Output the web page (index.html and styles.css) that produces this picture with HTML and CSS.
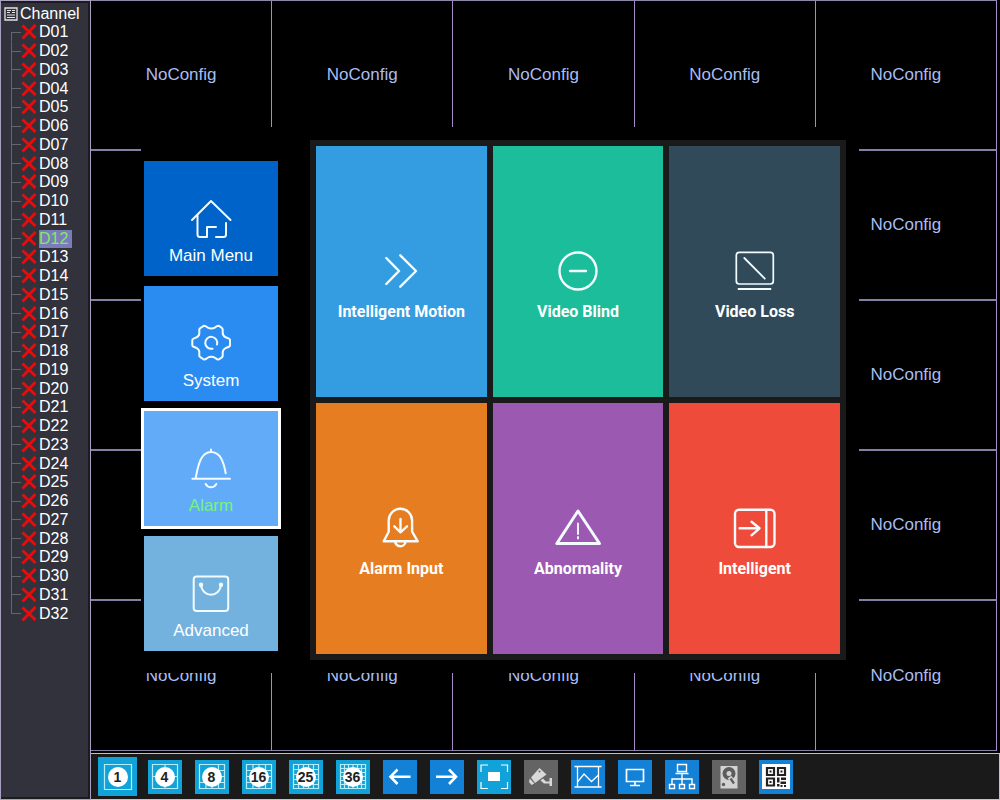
FILE: index.html
```html
<!DOCTYPE html>
<html lang="en">
<head>
<meta charset="utf-8">
<title>Video Recorder</title>
<link rel="stylesheet" href="styles.css">
</head>
<body>
<svg class="defs" aria-hidden="true">
  <symbol id="cross" viewBox="0 0 16 16"><path d="M1.500 1.500L14.500 14M14.500 1L1.500 14.500" stroke="#e80c0c" stroke-width="2.900" fill="none"/></symbol>
</svg>
<div class="app">
  <aside class="sidebar">
    <h1 class="tree-title">
      <svg class="tree-icon" viewBox="0 0 14 14"><path d="M1 1h12v12H1z" fill="none" stroke="#e4e4e4" stroke-width="1.300"/><path d="M3 3.500h4M3 5.500h3M3 8h8M3 10.500h8M8 3.500h3M8 5.500h3" stroke="#e4e4e4" stroke-width="1.200"/></svg>
      <span>Channel</span>
    </h1>
    <ul class="tree">
      <li><i></i><svg><use href="#cross"/></svg><span>D01</span></li>
      <li><i></i><svg><use href="#cross"/></svg><span>D02</span></li>
      <li><i></i><svg><use href="#cross"/></svg><span>D03</span></li>
      <li><i></i><svg><use href="#cross"/></svg><span>D04</span></li>
      <li><i></i><svg><use href="#cross"/></svg><span>D05</span></li>
      <li><i></i><svg><use href="#cross"/></svg><span>D06</span></li>
      <li><i></i><svg><use href="#cross"/></svg><span>D07</span></li>
      <li><i></i><svg><use href="#cross"/></svg><span>D08</span></li>
      <li><i></i><svg><use href="#cross"/></svg><span>D09</span></li>
      <li><i></i><svg><use href="#cross"/></svg><span>D10</span></li>
      <li><i></i><svg><use href="#cross"/></svg><span>D11</span></li>
      <li class="selected"><i></i><svg><use href="#cross"/></svg><span>D12</span></li>
      <li><i></i><svg><use href="#cross"/></svg><span>D13</span></li>
      <li><i></i><svg><use href="#cross"/></svg><span>D14</span></li>
      <li><i></i><svg><use href="#cross"/></svg><span>D15</span></li>
      <li><i></i><svg><use href="#cross"/></svg><span>D16</span></li>
      <li><i></i><svg><use href="#cross"/></svg><span>D17</span></li>
      <li><i></i><svg><use href="#cross"/></svg><span>D18</span></li>
      <li><i></i><svg><use href="#cross"/></svg><span>D19</span></li>
      <li><i></i><svg><use href="#cross"/></svg><span>D20</span></li>
      <li><i></i><svg><use href="#cross"/></svg><span>D21</span></li>
      <li><i></i><svg><use href="#cross"/></svg><span>D22</span></li>
      <li><i></i><svg><use href="#cross"/></svg><span>D23</span></li>
      <li><i></i><svg><use href="#cross"/></svg><span>D24</span></li>
      <li><i></i><svg><use href="#cross"/></svg><span>D25</span></li>
      <li><i></i><svg><use href="#cross"/></svg><span>D26</span></li>
      <li><i></i><svg><use href="#cross"/></svg><span>D27</span></li>
      <li><i></i><svg><use href="#cross"/></svg><span>D28</span></li>
      <li><i></i><svg><use href="#cross"/></svg><span>D29</span></li>
      <li><i></i><svg><use href="#cross"/></svg><span>D30</span></li>
      <li><i></i><svg><use href="#cross"/></svg><span>D31</span></li>
      <li><i></i><svg><use href="#cross"/></svg><span>D32</span></li>
    </ul>
  </aside>

  <main class="main">
    <div class="video-grid">
      <div>NoConfig</div><div>NoConfig</div><div>NoConfig</div><div>NoConfig</div><div>NoConfig</div>
      <div></div><div></div><div></div><div></div><div>NoConfig</div>
      <div></div><div></div><div></div><div></div><div>NoConfig</div>
      <div></div><div></div><div></div><div></div><div>NoConfig</div>
      <div>NoConfig</div><div>NoConfig</div><div>NoConfig</div><div>NoConfig</div><div>NoConfig</div>
    </div>

    <div class="toolbar">
      <button class="tool split current" aria-label="1 view"><svg viewBox="0 0 34 34"><path d="M3.500 4.500h27v25h-27z"/></svg><span>1</span></button>
      <button class="tool split" aria-label="4 views"><svg viewBox="0 0 34 34"><path d="M4.500 4.500h25v24h-25zM17 4.500v24M4.500 16.500h25"/></svg><span>4</span></button>
      <button class="tool split" aria-label="8 views"><svg viewBox="0 0 34 34"><path d="M4.500 4.500h25v24h-25zM23.500 4.500v24M4.500 22.500h25M11 22.500v6M17 22.500v6M23.500 10.500h6M23.500 16.500h6"/></svg><span>8</span></button>
      <button class="tool split" aria-label="16 views"><svg viewBox="0 0 34 34"><path d="M4.500 4.500h25v24h-25zM11 4.500v24M17 4.500v24M23.500 4.500v24M4.500 10.500h25M4.500 16.500h25M4.500 22.500h25"/></svg><span>16</span></button>
      <button class="tool split" aria-label="25 views"><svg viewBox="0 0 34 34"><path d="M4.500 4.500h25v24h-25zM9.500 4.500v24M14.500 4.500v24M19.500 4.500v24M24.500 4.500v24M4.500 9.500h25M4.500 14.500h25M4.500 19.500h25M4.500 24.500h25"/></svg><span>25</span></button>
      <button class="tool split" aria-label="36 views"><svg viewBox="0 0 34 34"><path d="M4.500 4.500h25v24h-25zM8.500 4.500v24M12.500 4.500v24M17 4.500v24M21.500 4.500v24M25.500 4.500v24M4.500 8.500h25M4.500 12.500h25M4.500 16.500h25M4.500 20.500h25M4.500 24.500h25"/></svg><span>36</span></button>
      <button class="tool blue" aria-label="Previous"><svg viewBox="0 0 34 34"><path d="M27.500 16.700H7.500M14.500 9.500L7.500 16.700l7 7.300" stroke-width="2.600"/></svg></button>
      <button class="tool blue" aria-label="Next"><svg viewBox="0 0 34 34"><path d="M6 16.700h20M19 9.500l7 7.200-7 7.300" stroke-width="2.600"/></svg></button>
      <button class="tool" aria-label="Full screen"><svg viewBox="0 0 34 34"><path d="M4 12V5h7M24 5h6.500v7M30.500 22v6.500H24M11 28.500H4V22"/><path d="M11 12h12v9H11z" fill="#fff" stroke="none"/></svg></button>
      <button class="tool gray" aria-label="PTZ"><svg viewBox="0 0 34 34"><g fill="#d8d8d8" stroke="none"><path d="M15.500 8l7 6.500L11 23l-4-5.500z"/><path d="M5.800 18.500l4.500 5-2.800 1.500-2.500-3z"/><path d="M16.500 20.500l2.500-2 3 3h3.500V18H28v8h-2.500v-2.500H20z"/></g><circle cx="15.500" cy="11.500" r="1" fill="#646464" stroke="none"/></svg></button>
      <button class="tool blue" aria-label="Image"><svg viewBox="0 0 34 34"><path d="M3.500 6.500h27M3.500 27h27M6.500 6.500V27M27.500 6.500V27M6.500 22l6.500-8 7.500 7.500 7-6.500" stroke-width="1.300"/></svg></button>
      <button class="tool blue" aria-label="Output"><svg viewBox="0 0 34 34"><path d="M8.500 9.500h17v12h-17zM17 22v3M12 25.500h10" stroke-width="1.700"/></svg></button>
      <button class="tool blue" aria-label="Network"><svg viewBox="0 0 34 34"><path d="M12.500 4.500h9v7h-9zM10.500 13.500h13M17 14v10M7 24v-5h20v5M4.500 24.500h5v4h-5zM14.500 24.500h5v4h-5zM24.500 24.500h5v4h-5z" stroke-width="1.400"/></svg></button>
      <button class="tool gray" aria-label="Disk"><svg viewBox="0 0 34 34"><path d="M8.500 6h17v22.500h-17z" fill="#d2d2d2" stroke="none"/><circle cx="17" cy="13.500" r="4.500" stroke="#5c5c5c" stroke-width="4"/><path d="M17.500 17l5.500 7.500" stroke="#d2d2d2" stroke-width="4.500"/><path d="M18.500 18.500l3.500 5" stroke="#5c5c5c" stroke-width="2.200"/><circle cx="11.500" cy="24.500" r="1.700" fill="#5c5c5c" stroke="none"/></svg></button>
      <button class="tool blue" aria-label="QR code"><svg viewBox="0 0 34 34"><path d="M3 4h28v25H3z" fill="#fff" stroke="none"/><path d="M8 8h7v7H8zM19 8h7v7h-7zM8 18.500h7v7H8z" stroke="#222" stroke-width="2.200"/><path d="M10.500 10.500h2v2h-2zM21.500 10.500h2v2h-2zM10.500 21h2v2h-2zM18 17.500h2.500v5H18zM22 17.500h5v2.500h-5zM18 24h2.500v2.500H18zM21.500 21.500h5.500V24h-5.500zM21.500 25h2v2h-2zM25 25h2v2h-2z" fill="#222" stroke="none"/></svg></button>
    </div>
  </main>
</div>

<div class="overlay">
  <nav class="menu">
    <button class="menu-item main-menu"><svg viewBox="1 0 44 44"><path d="M4 23L23 4l19.500 19M9.500 18v19.500q0 2.500 2.500 2.500h7V30h9M38 26v11.500q0 2.500-2.500 2.500H28"/></svg><span>Main Menu</span></button>
    <button class="menu-item system"><svg viewBox="1 0 44 44"><path d="M4.300 18Q4.300 17 5.500 16.600L8.700 15.300Q11.700 13.500 11.300 10.700V7.300Q11.500 6.500 16 3.700Q17.500 3.700 19.300 5.300Q23.300 7.700 27.300 5.300Q29 3.700 30.500 3.700Q34.500 6 34.700 7.300V10.700Q34.500 13.500 37.700 15.300L41 16.600Q42 17 42 18V23.300Q42 24.300 41 24.700L37.700 26Q34.500 27.800 34.700 30.600V34Q34.500 35.300 30.500 37.600Q29 37.600 27.300 36Q23.300 33.600 19.300 36Q17.500 37.600 16 37.600Q11.500 34.800 11.300 34V30.600Q11.700 27.800 8.700 26L5.500 24.700Q4.300 24.300 4.300 23.300Z"/><path d="M29 22.500A6 6 0 1 0 24.500 26.700"/></svg><span>System</span></button>
    <button class="menu-item alarm" aria-current="page"><svg viewBox="1 0 44 44"><path d="M23 2.500V5M37.700 26.300C35.500 14 32 5 23 5C13.500 5 10.500 16 7.800 30.500M4.300 31.700H42M17.700 37Q19.500 40.300 23 40.300T28.300 37"/></svg><span>Alarm</span></button>
    <button class="menu-item advanced"><svg viewBox="1 0 44 44"><rect x="5.700" y="4.500" width="34.500" height="34.500" rx="3"/><path d="M13 13C14.500 26 31.500 26 33 13"/><circle cx="13" cy="12.700" r="1.200"/><circle cx="33" cy="12.700" r="1.200"/></svg><span>Advanced</span></button>
  </nav>
  <section class="panel">
    <button class="tile motion"><svg viewBox="0 0 48 48"><path d="M9.300 11L22 24 9.300 37M23.300 8.300L39 24 23.300 39.700"/></svg><span>Intelligent Motion</span></button>
    <button class="tile blind"><svg viewBox="0 0 48 48"><circle cx="24" cy="24" r="18.500"/><path d="M16 24h16"/></svg><span>Video Blind</span></button>
    <button class="tile loss"><svg viewBox="0 0 48 48"><rect x="5.300" y="5.300" width="37" height="31.700" rx="3" stroke-width="1.700"/><path d="M13.300 11l20.500 20.700M7.500 42H39.500" stroke-width="1.800"/></svg><span>Video Loss</span></button>
    <button class="tile input"><svg viewBox="0 0 48 48"><path d="M11.700 27.700V16.500a11.700 11.700 0 0 1 23.400 0V27.700L40.700 37.300H6.700ZM18 38Q19.500 42.300 23.400 42.300T28.700 38M23.500 15V28M17.300 22.300L23.500 28.300 30 22.300"/></svg><span>Alarm Input</span></button>
    <button class="tile abnormal"><svg viewBox="0 0 48 48"><path d="M24 7L2.800 39.500H45.500Z" stroke-width="3"/><path d="M24 19.500V30M24 33V34.500" stroke-width="1.900"/></svg><span>Abnormality</span></button>
    <button class="tile intelligent"><svg viewBox="0 0 48 48"><rect x="4" y="5.700" width="39.500" height="37.300" rx="4"/><path d="M35.300 6V43M8.700 24.300H28.500M20.500 17.700L28.500 24.300 20.500 31.300"/></svg><span>Intelligent</span></button>
  </section>
</div>
</body>
</html>
```
FILE: styles.css
```css
* { box-sizing: border-box; }

body {
  margin: 0;
  background: #000;
  color: #fff;
  font: 16px/18px "Liberation Sans", Arial, sans-serif;
}

button {
  margin: 0;
  padding: 0;
  border: 0;
  color: inherit;
  font: inherit;
}

.defs { position: absolute; width: 0; height: 0; }

.app {
  display: grid;
  grid-template-columns: 91px 1fr;
  height: 100vh;
}

/* Channel tree */
.sidebar {
  padding-top: 2px;
  background: #32323c;
  border: solid #1c1c1e;
  border-width: 3px 3px 3px 0;
  box-shadow: inset 1px 0 #9a9f98;
  outline: 1px solid #a99fc0;
  outline-offset: -1px;
}

.tree-title {
  display: flex;
  align-items: center;
  gap: 2px;
  margin: 0;
  padding-left: 4px;
  height: 18px;
  font-size: 16px;
  font-weight: normal;
}

.tree-icon { width: 14px; height: 14px; }

.tree {
  display: grid;
  grid-auto-rows: 1fr;
  height: 75vh;
  margin: 0;
  padding: 0 0 0 11px;
  list-style: none;
}

.tree li { display: flex; align-items: center; }

.tree i {
  width: 10px;
  height: 100%;
  background:
    linear-gradient(#66666a, #66666a) 0 0 / 1px 100% no-repeat,
    linear-gradient(#66666a, #66666a) 0 50% / 100% 1px no-repeat;
}

.tree li:first-child i { background-position: 0 100%, 0 50%; background-size: 1px 50%, 100% 1px; }
.tree li:last-child i { background-size: 1px 50%, 100% 1px; }

.tree svg { width: 16px; height: 16px; margin-right: 2px; }

.tree .selected span {
  padding-right: 4px;
  background: #7b7db8;
  color: #83e86c;
}

/* Live view */
.main {
  display: grid;
  grid-template-rows: 1fr 47px;
  gap: 2px;
  min-width: 0;
}

.video-grid {
  display: grid;
  grid-template: repeat(5, 1fr) / repeat(5, 1fr);
  margin-right: 3px;
  border-top: 1px solid #8d86a8;
  color: #a9bdf2;
  font-size: 17px;
}

.video-grid div {
  display: grid;
  place-items: center;
  border-right: 1px solid #a68cc4;
  border-bottom: 2px solid #887ea2;
}

.video-grid div:nth-last-child(-n + 5) { border-bottom-width: 1px; }

.toolbar {
  display: grid;
  grid-auto-flow: column;
  grid-auto-columns: 47px;
  place-items: center;
  justify-content: start;
  padding-left: 3px;
  background: #1a1a1a;
  border: 1px solid #c4bfc8;
  border-left: 0;
}

.tool {
  display: grid;
  place-items: center;
  width: 34px;
  height: 34px;
  background: #10a2d9;
}

.tool.current { width: 39px; height: 39px; }
.tool.blue { background: #1281d6; }
.tool.gray { background: #646464; }

.tool svg {
  grid-area: 1 / 1;
  width: 34px;
  height: 34px;
  fill: none;
  stroke: #fff;
  stroke-width: 1.2;
}

.split svg { stroke: #b5eefb; }

.split span {
  grid-area: 1 / 1;
  width: 20px;
  border-radius: 50%;
  background: #fff;
  color: #222;
  font-size: 14px;
  font-weight: bold;
  line-height: 20px;
  text-align: center;
}

/* Menu window over the live view */
.overlay {
  position: fixed;
  inset: 127px 141px;
  display: grid;
  grid-template-columns: 134px 1fr;
  gap: 32px;
  padding: 13px 13px 13px 3px;
  background: #000;
}

.menu {
  display: grid;
  grid-auto-rows: 1fr;
  gap: 10px;
  padding: 21px 0 9px;
}

.menu-item,
.tile {
  display: flex;
  flex-direction: column;
  align-items: center;
  justify-content: center;
  line-height: 20px;
}

.menu-item {
  gap: 5px;
  padding-top: 26px;
  font-size: 17px;
}

.menu-item svg,
.tile svg {
  fill: none;
  stroke: #f2fcff;
  stroke-width: 2;
  stroke-linecap: round;
  stroke-linejoin: round;
}

.menu-item svg { width: 44px; height: 44px; }

.main-menu { background: #0063c9; }
.system { background: #2a8cf0; }
.alarm { background: #62abf8; color: #74f47c; outline: 3px solid #fff; }
.advanced { background: #73b2de; }

.panel {
  display: grid;
  grid-template: repeat(2, 1fr) / repeat(3, 1fr);
  gap: 6px;
  padding: 6px;
  background: #1a1a1a;
}

.tile {
  gap: 7px;
  padding-top: 26px;
  font-family: Roboto, "Liberation Sans", sans-serif;
  font-weight: bold;
}

.tile svg { width: 48px; height: 48px; stroke-width: 2.4; }

.motion { background: #349ce0; }
.blind { background: #1cbd9b; }
.loss { background: #304a5a; }
.input { background: #e67d21; }
.abnormal { background: #9b59b2; }
.intelligent { background: #ef4b3a; }
```
